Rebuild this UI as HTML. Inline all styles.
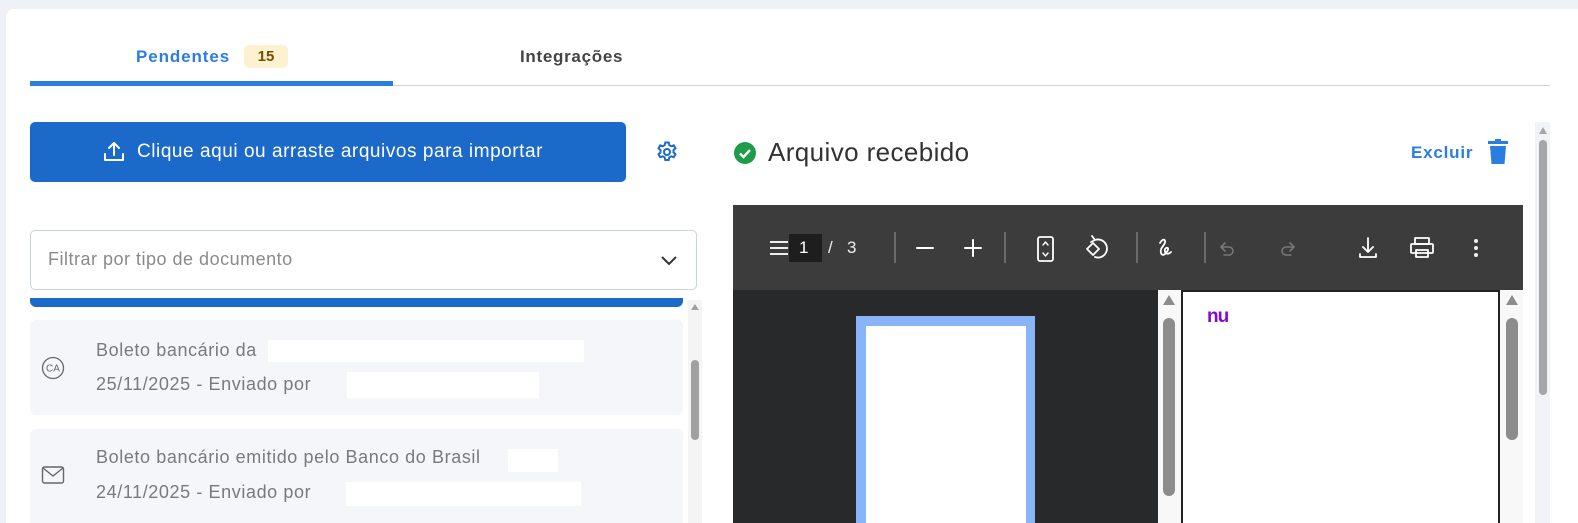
<!DOCTYPE html>
<html style="overflow:hidden"><head><meta charset="utf-8"><style>
*{margin:0;padding:0;box-sizing:border-box}
html,body{width:1578px;height:523px;overflow:hidden}
body{background:#eef1f6;font-family:"Liberation Sans",sans-serif;position:relative}
.a{position:absolute}
.card{left:6px;top:9px;width:1572px;height:514px;background:#fff;border-radius:8px 0 0 0}
.t{white-space:nowrap}
.item{background:#f4f6fa;border-radius:6px}
.gray{color:#7a7a7a;font-size:18px;letter-spacing:0.6px}
.wb{background:#fff}
.ic{stroke:#fff;fill:none;stroke-width:2;stroke-linecap:round;stroke-linejoin:round}
</style></head><body>
<div class="a card"></div>
<div class="a t" style="left:136px;top:47px;font-size:17px;font-weight:bold;color:#2a7de1;letter-spacing:0.9px">Pendentes</div>
<div class="a t" style="left:244px;top:45px;width:44px;height:23px;background:#fdf2d0;border-radius:5px;color:#7a4a00;font-size:15px;font-weight:bold;text-align:center;line-height:23px">15</div>
<div class="a t" style="left:520px;top:47px;font-size:17px;font-weight:bold;color:#444;letter-spacing:0.7px">Integrações</div>
<div class="a" style="left:393px;top:85px;width:1157px;height:1px;background:#cfd4db"></div>
<div class="a" style="left:30px;top:81px;width:363px;height:5px;background:#2a7de1"></div>

<div class="a" style="left:30px;top:122px;width:596px;height:60px;background:#1b6ac9;border-radius:5px"></div>
<svg class="a" style="left:102px;top:140px" width="24" height="24" viewBox="0 0 24 24"><path class="ic" d="M12 15V3M7 8l5-5 5 5M3 14v6h18v-6"/></svg>
<div class="a t" style="left:137px;top:141px;font-size:19px;color:#fff;letter-spacing:0.55px">Clique aqui ou arraste arquivos para importar</div>
<svg class="a" style="left:655px;top:140px" width="24" height="24" viewBox="0 0 24 24"><circle cx="12" cy="12" r="3" fill="none" stroke="#1b6ac9" stroke-width="2"/><path fill="none" stroke="#1b6ac9" stroke-width="2" d="M10.3 2.5h3.4l.6 2.6 2 1.1 2.5-.9 1.7 3-2 1.8v2.3l2 1.8-1.7 3-2.5-.9-2 1.1-.6 2.6h-3.4l-.6-2.6-2-1.1-2.5.9-1.7-3 2-1.8v-2.3l-2-1.8 1.7-3 2.5.9 2-1.1z"/></svg>

<div class="a" style="left:30px;top:230px;width:667px;height:60px;border:1px solid #c9d3e0;border-radius:5px"></div>
<div class="a t" style="left:48px;top:249px;font-size:18px;color:#8a8a8a;letter-spacing:0.5px">Filtrar por tipo de documento</div>
<svg class="a" style="left:660px;top:252px" width="18" height="16" viewBox="0 0 18 16"><path d="M2 5l7 7 7-7" fill="none" stroke="#333" stroke-width="2"/></svg>
<div class="a" style="left:30px;top:298px;width:653px;height:9px;background:#1b6ac9;border-radius:0 0 6px 6px"></div>
<div class="a" style="left:688px;top:300px;width:14px;height:223px;background:#f4f4f4"></div>
<div class="a" style="left:691px;top:304px;width:0;height:0;border-left:4px solid transparent;border-right:4px solid transparent;border-bottom:6px solid #a0a0a0"></div>
<div class="a" style="left:691px;top:360px;width:8px;height:80px;background:#a0a0a0;border-radius:4px"></div>

<div class="a item" style="left:30px;top:320px;width:653px;height:95px"></div>
<svg class="a" style="left:41px;top:356px" width="24" height="24" viewBox="0 0 24 24"><circle cx="12" cy="12" r="10.5" fill="none" stroke="#666" stroke-width="1.3"/><text x="12" y="15.5" font-size="10" text-anchor="middle" fill="#666" font-family="Liberation Sans">CA</text></svg>
<div class="a t gray" style="left:96px;top:340px">Boleto bancário da</div>
<div class="a wb" style="left:268px;top:340px;width:316px;height:22px"></div>
<div class="a t gray" style="left:96px;top:374px">25/11/2025 - Enviado por</div>
<div class="a wb" style="left:347px;top:372px;width:192px;height:26px"></div>

<div class="a item" style="left:30px;top:429px;width:653px;height:100px"></div>
<svg class="a" style="left:41px;top:465px" width="24" height="20" viewBox="0 0 24 20"><rect x="1.5" y="2" width="21" height="16" rx="2" fill="none" stroke="#666" stroke-width="1.4"/><path d="M2 3l10 8 10-8" fill="none" stroke="#666" stroke-width="1.4"/></svg>
<div class="a t gray" style="left:96px;top:447px">Boleto bancário emitido pelo Banco do Brasil</div>
<div class="a wb" style="left:508px;top:449px;width:50px;height:23px"></div>
<div class="a t gray" style="left:96px;top:482px">24/11/2025 - Enviado por</div>
<div class="a wb" style="left:346px;top:482px;width:235px;height:24px"></div>

<svg class="a" style="left:733px;top:141px" width="24" height="24" viewBox="0 0 24 24"><circle cx="12" cy="12" r="11" fill="#1e9c4a"/><path d="M7 12.5l3.5 3.5 6.5-7" fill="none" stroke="#fff" stroke-width="2.4"/></svg>
<div class="a t" style="left:768px;top:137px;font-size:26px;color:#333;letter-spacing:0.4px">Arquivo recebido</div>
<div class="a t" style="left:1411px;top:143px;font-size:17px;font-weight:bold;color:#2a7de1;letter-spacing:0.8px">Excluir</div>
<svg class="a" style="left:1487px;top:139px" width="22" height="26" viewBox="0 0 22 26"><rect x="1" y="2" width="20" height="3" fill="#2a7de1"/><rect x="8" y="0" width="6" height="3" fill="#2a7de1"/><path d="M3 7h16l-1.5 18h-13z" fill="#2a7de1"/></svg>

<div class="a" style="left:1535px;top:122px;width:15px;height:401px;background:#f0f3f8"></div>
<div class="a" style="left:1539px;top:127px;width:0;height:0;border-left:4px solid transparent;border-right:4px solid transparent;border-bottom:7px solid #a4a6aa"></div>
<div class="a" style="left:1539px;top:140px;width:8px;height:255px;background:#a4a6aa;border-radius:4px"></div>

<div class="a" style="left:733px;top:205px;width:790px;height:85px;background:#3c3c3c"></div>
<div class="a" style="left:733px;top:290px;width:425px;height:233px;background:#28292b"></div>
<svg class="a" style="left:768px;top:238px" width="22" height="20"><path d="M2 4h18M2 10h18M2 16h18" stroke="#eee" stroke-width="2"/></svg>
<div class="a t" style="left:789px;top:234px;width:33px;height:28px;background:#1e1e1e;color:#fff;font-size:17px;line-height:28px;padding-left:10px">1</div>
<div class="a t" style="left:828px;top:238px;color:#eee;font-size:17px">/</div>
<div class="a t" style="left:847px;top:238px;color:#eee;font-size:17px">3</div>
<div class="a" style="left:894px;top:232px;width:2px;height:31px;background:#6a6a6a"></div>
<div class="a" style="left:1004px;top:232px;width:2px;height:31px;background:#6a6a6a"></div>
<div class="a" style="left:1136px;top:232px;width:2px;height:31px;background:#6a6a6a"></div>
<div class="a" style="left:1204px;top:232px;width:2px;height:31px;background:#6a6a6a"></div>
<svg class="a" style="left:733px;top:205px" width="790" height="85">
<g class="ic">
<path d="M184 43h16M232 43h16M240 35v16"/>
<rect x="305" y="32" width="15" height="24" rx="2" stroke-width="1.8"/>
<path d="M310 40l2.5-3 2.5 3M310 48l2.5 3 2.5-3" stroke-width="1.4"/>
<path d="M354 44l6-6 6 6-6 6z" stroke-width="1.8"/>
<path d="M362 35a9 9 0 1 1 0 17M359 31l3 4-4 2" stroke-width="1.8"/>
<path d="M427 38c3-6 8-3 3 3-4 5-2 11 2 8 4-4 4-7 1-6-3 2 0 9 5 4" stroke-width="1.8"/>
<path d="M492 38l-4 4 4 4M488 42h8a4 4 0 0 1 0 8h-5" stroke="#777" stroke-width="1.6"/>
<path d="M557 38l4 4-4 4M561 42h-8a4 4 0 0 0 0 8h5" stroke="#777" stroke-width="1.6"/>
<path d="M635 33v14M630 42l5 5 5-5M627 49v3h16v-3" stroke-width="1.8"/>
<rect x="682" y="33" width="14" height="6" stroke-width="1.8"/>
<rect x="678" y="39" width="22" height="9" rx="1" stroke-width="1.8"/>
<rect x="683" y="45" width="12" height="7" stroke-width="1.8"/>
</g>
<circle cx="743" cy="36" r="2" fill="#eee"/><circle cx="743" cy="43" r="2" fill="#eee"/><circle cx="743" cy="50" r="2" fill="#eee"/>
</svg>
<div class="a" style="left:856px;top:316px;width:179px;height:210px;background:#8ab4f8"></div>
<div class="a" style="left:866px;top:326px;width:160px;height:200px;background:#fff"></div>
<div class="a" style="left:1158px;top:290px;width:23px;height:233px;background:#f8f8f8"></div>
<div class="a" style="left:1163px;top:295px;width:0;height:0;border-left:6px solid transparent;border-right:6px solid transparent;border-bottom:10px solid #8c8c8c"></div>
<div class="a" style="left:1163px;top:318px;width:12px;height:178px;background:#8c8c8c;border-radius:6px"></div>
<div class="a" style="left:1181px;top:290px;width:319px;height:233px;background:#fff;border:2px solid #222;border-bottom:none"></div>
<div class="a t" style="left:1207px;top:306px;font-size:19px;font-weight:bold;color:#820ad1;letter-spacing:-1px">nu</div>
<div class="a" style="left:1500px;top:290px;width:23px;height:233px;background:#f8f8f8"></div>
<div class="a" style="left:1506px;top:295px;width:0;height:0;border-left:6px solid transparent;border-right:6px solid transparent;border-bottom:10px solid #8c8c8c"></div>
<div class="a" style="left:1506px;top:318px;width:12px;height:122px;background:#8c8c8c;border-radius:6px"></div>
</body></html>
